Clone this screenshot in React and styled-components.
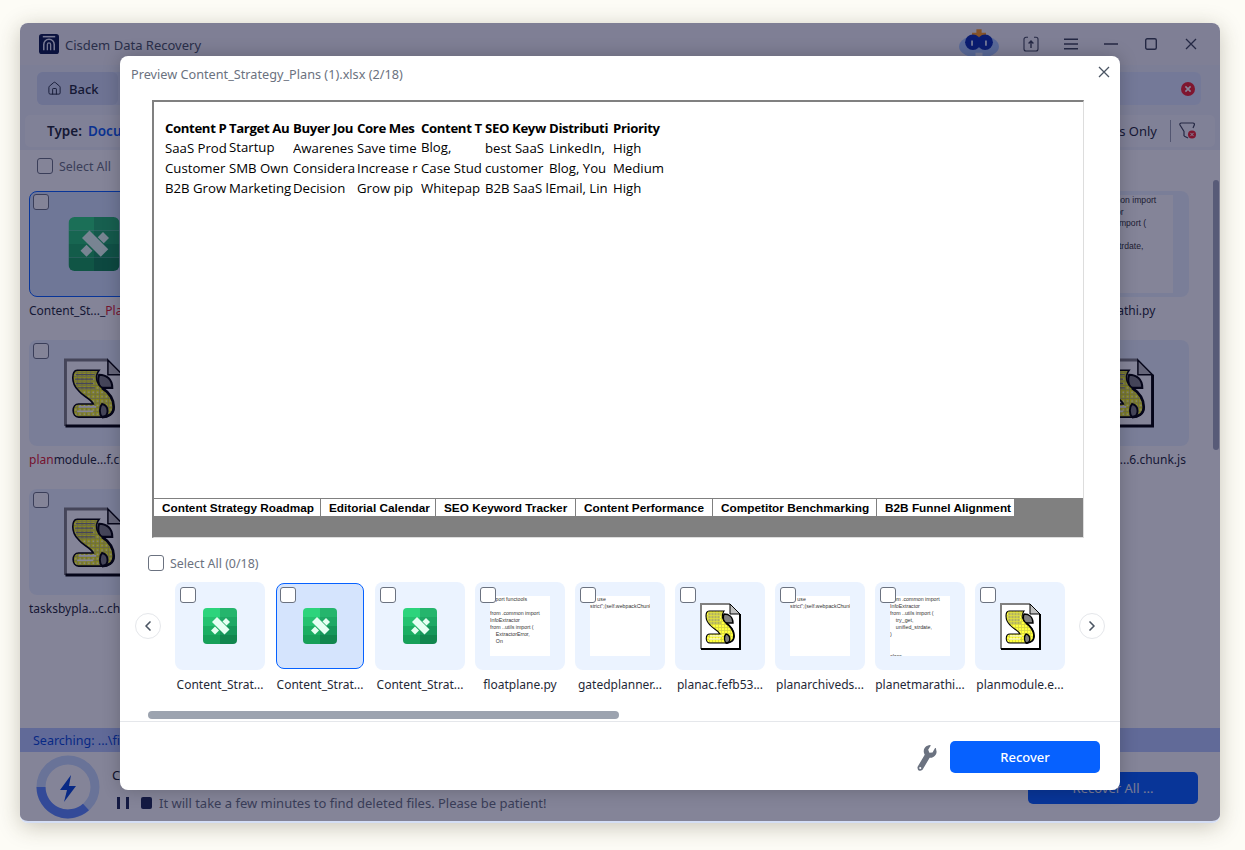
import React from "react";
import styled, { createGlobalStyle } from "styled-components";
import { FaWrench } from "react-icons/fa";
import { ChevronLeft, ChevronRight, House } from "lucide-react";

const Global = createGlobalStyle`
  html, body { margin: 0; padding: 0; height: 100%; background: #fdfcf6; }
  body { font-family: "Noto Sans", "Open Sans", Arial, sans-serif; }
  * { box-sizing: border-box; }
`;

const Page = styled.div`
  width: 1245px; height: 850px; padding: 23px 25px 27px 20px; overflow: hidden;
`;
const Win = styled.div`
  position: relative; width: 1200px; height: 800px; border-radius: 8px; overflow: hidden;
  background: #fff; display: flex; flex-direction: column;
  border-bottom: 2px solid #d4def5;
`;
const WinShadow = styled.div`
  border-radius: 8px; box-shadow: 0 4px 22px rgba(60, 55, 30, 0.28);
`;
const TitleBar = styled.div`
  height: 42px; display: flex; align-items: center; padding: 0 9px 0 19px; background: #f4f4f8; flex: none;
`;
const AppName = styled.span`
  font-size: 13px; color: #4b5563; margin-left: 6px; flex: 1; padding-top: 1px;
`;
const WinIcons = styled.div`
  display: flex; align-items: center; color: #3f4656;
`;
const WinIconCell = styled.div`
  width: ${p => p.$w || 40}px; display: flex; justify-content: center; align-items: center;
`;
const Toolbar = styled.div`
  flex: none; height: 48px; padding: 7px 19px 8px 17px; background: #eef2fb;
`;
const SearchBar = styled.div`
  height: 33px; border-radius: 6px; background: #dfe9ff; display: flex; align-items: center; justify-content: space-between; padding-right: 6px;
`;
const BackBtn = styled.div`
  width: 81px; height: 33px; border-radius: 6px; background: #d2dcf5; display: flex; align-items: center; gap: 7px; padding-left: 10px;
  font-size: 13px; font-weight: 500; color: #1f2937;
`;
const TypeWrap = styled.div`
  flex: none; height: 37px; padding: 2px 5px 3px 5px; background: #eef2fb;
`;
const TypeBar = styled.div`
  height: 32px; border-radius: 5px; background: #f7f8fc; display: flex; align-items: center; padding: 0 18px 0 22px; font-size: 13px; color: #1f2937;
`;
const TypeLabel = styled.b`
  font-weight: 600; font-size: 13.5px; margin-right: 6px;
`;
const TypeValue = styled.b`
  font-weight: 600; font-size: 13.5px; color: #0a5bf0; flex: 1;
`;
const Divider = styled.div`
  width: 1px; height: 22px; background: #9aa0ae; margin: 0 8px 0 13px;
`;
const SelectRow = styled.label`
  display: flex; align-items: center; gap: 6px; font-size: 12.4px; color: #6b7280;
`;
const MainSelect = styled.div`
  flex: none; height: 41px; padding: 0 0 9px 17px; display: flex; align-items: center;
`;
const Box = styled.span`
  display: block; flex: none; width: 16px; height: 16px; border-radius: 3px; border: 1px solid #6b7280; background: #fff;
`;
const FileGrid = styled.div`
  flex: 1; min-height: 0; padding: 0 31px 0 9px; display: grid; grid-template-columns: repeat(8, 130px); column-gap: 17.14px; grid-auto-rows: 149px;
`;
const FileCell = styled.div`
  position: relative; min-width: 0;
`;
const FileCard = styled.div`
  height: 106px; border-radius: 8px; display: flex; align-items: center; justify-content: center;
  background: ${p => (p.$active ? "#d5e4fd" : "#ebf3ff")};
  border: ${p => (p.$active ? "1.5px solid #0661ff" : "none")};
`;
const FileName = styled.div`
  margin-top: 6px; font-size: 12px; line-height: 16px; color: #1f2937; white-space: nowrap;
`;
const Hit = styled.span`
  color: #e0202a;
`;
const CardCheck = styled.div`
  position: absolute; top: 3px; left: 4px;
`;
const ScrollThumb = styled.div`
  position: absolute; top: 157px; right: 1px; width: 6px; height: 270px; border-radius: 3px; background: #a6adbf;
`;
const SearchStrip = styled.div`
  flex: none; height: 24px; background: #b9cbff; color: #0648d8; font-size: 12.5px; display: flex; align-items: center; padding-left: 13px;
`;
const BottomBar = styled.div`
  flex: none; height: 69px; display: flex; align-items: center; padding: 0 22px 0 16px; position: relative;
`;
const Ring = styled.div`
  flex: none; width: 64px; height: 64px; margin-right: 12px;
`;
const StatusCol = styled.div`
  flex: 1; display: flex; flex-direction: column; gap: 11px; padding-top: 3px;
`;
const StatusTitle = styled.div`
  font-size: 13px; line-height: 18px; color: #111827;
`;
const StatusLine = styled.div`
  display: flex; align-items: center; font-size: 13px; line-height: 16px; color: #6b7280; padding-left: 5px;
`;
const PauseIcon = styled.span`
  width: 12px; height: 12px; border-left: 3px solid #1f2a55; border-right: 3px solid #1f2a55; margin-right: 12px; padding: 0 3px;
`;
const StopIcon = styled.span`
  width: 11px; height: 12px; border-radius: 2px; background: #1f2a55; margin-right: 7px;
`;
const RecoverAll = styled.div`
  flex: none; width: 170px; height: 32px; border-radius: 5px; background: #0661ff; font-size: 13px;
  display: flex; align-items: center; justify-content: center; margin-top: 3px;
`;
const RecoverAllText = styled.span`
  color: #e8ecf8;
`;

const Dim = styled.div`
  position: absolute; inset: 0; background: rgba(10, 10, 50, 0.5);
`;
const Modal = styled.div`
  position: absolute; left: 100px; top: 33px; width: 1000px; height: 734px; background: #fff; border-radius: 8px;
  box-shadow: 0 0 18px rgba(0, 0, 0, 0.22); display: flex; flex-direction: column;
`;
const ModalHead = styled.div`
  flex: none; height: 44px; display: flex; align-items: flex-start; justify-content: space-between; padding: 9px 10px 0 11px;
  font-size: 12.7px; line-height: 18px; color: #6b7280;
`;
const ModalClose = styled.div`
  margin-top: 1px; display: flex; color: #4b5563;
`;
const Preview = styled.div`
  flex: none; margin-left: 32px; width: 932px; height: 438px; border-top: 2px solid #808080; border-left: 2px solid #808080;
  border-right: 1px solid #ddd; border-bottom: 1px solid #ddd; display: flex; flex-direction: column;
`;
const Sheet = styled.div`
  flex: 1; padding: 16px 0 0 11px; display: grid; grid-template-columns: repeat(8, 64px); grid-auto-rows: 20px; align-content: start;
  font-size: 13.2px; line-height: 20px; color: #000; font-family: "Open Sans", "Noto Sans", sans-serif;
`;
const Cell = styled.div`
  white-space: nowrap; overflow: hidden; font-weight: ${p => (p.$head ? 700 : 400)}; margin-top: ${p => (p.$up ? -1 : 0)}px;
  letter-spacing: ${p => (p.$head ? "-0.38px" : "0")};
`;
const TabStrip = styled.div`
  flex: none; height: 39px; background: #808080; display: grid; grid-template-columns: 167px 115px 140px 137px 164px 138px; grid-auto-rows: 17px; padding-top: 1px;
`;
const SheetTab = styled.div`
  background: #fff; border-right: 1px solid #808080; padding-left: 8px; display: flex; align-items: center;
  font-family: "Liberation Sans", Arial, sans-serif; font-weight: 700; font-size: 11.8px; color: #000; white-space: nowrap;
`;
const ThumbHead = styled.div`
  flex: none; height: 44px; padding: 6px 0 0 28px; display: flex; align-items: center;
`;
const Carousel = styled.div`
  flex: none; display: flex; align-items: flex-start; padding-left: 15px;
`;
const ArrowBtn = styled.div`
  flex: none; width: 26px; height: 26px; margin-top: 31px; border-radius: 50%; background: #fff; border: 1px solid #e5e7eb;
  display: flex; align-items: center; justify-content: center; color: #4b5563;
`;
const Track = styled.div`
  flex: none; width: 890px; margin: 0 14px; display: flex; gap: 10px; overflow: hidden;
`;
const Thumb = styled.div`
  position: relative; flex: none; width: 90px; display: flex; flex-direction: column;
`;
const ThumbCard = styled.div`
  border-radius: 8px; display: flex; align-items: center; justify-content: center;
  height: ${p => (p.$active ? 86 : 88)}px;
  margin: ${p => (p.$active ? 1 : 0)}px;
  background: ${p => (p.$active ? "#d5e4fd" : "#ebf3ff")};
  border: ${p => (p.$active ? "1px solid #0661ff" : "none")};
`;
const ThumbName = styled.div`
  margin-top: 7px; font-size: 12px; line-height: 16px; color: #1f2937; text-align: center; white-space: nowrap;
`;
const ThumbCheck = styled.div`
  position: absolute; top: 5px; left: 5px;
`;
const CodePage = styled.pre`
  margin: 0; background: #fff; overflow: hidden; white-space: pre; text-align: left; font-family: "Liberation Sans", Arial, sans-serif; color: #333;
  width: ${p => p.$size}px; height: ${p => p.$size}px; font-size: ${p => p.$size * 0.088}px; line-height: ${p => p.$size * 0.118}px;
`;
const HScroll = styled.div`
  flex: none; margin: 18px 0 0 28px; width: 471px; height: 8px; border-radius: 4px; background: #9ca3af;
`;
const ModalFoot = styled.div`
  flex: 1; margin-top: 2px; border-top: 1px solid #e5e7eb; display: flex; align-items: center; justify-content: flex-end; padding: 2px 20px 0 0; gap: 12px; color: #6b7280;
`;
const WrenchWrap = styled.div`
  display: flex; transform: rotate(-14deg);
`;
const RecoverBtn = styled.div`
  width: 150px; height: 32px; border-radius: 5px; background: #0661ff; color: #fff; font-size: 13px; font-weight: 500;
  display: flex; align-items: center; justify-content: center;
`;

function ExcelIcon({ w = 34, h = 36 }) {
  return (
    <svg width={w} height={h} viewBox="0 0 34 36">
      <defs>
        <clipPath id="xl"><rect width="34" height="36" rx="4" /></clipPath>
      </defs>
      <g clipPath="url(#xl)">
        <rect x="0" y="0" width="17" height="9" fill="#2dd47c" />
        <rect x="0" y="9" width="17" height="9" fill="#25c270" />
        <rect x="0" y="18" width="17" height="9" fill="#1cae62" />
        <rect x="0" y="27" width="17" height="9" fill="#17a059" />
        <rect x="17" y="0" width="17" height="9" fill="#25b56d" />
        <rect x="17" y="9" width="17" height="9" fill="#1ea865" />
        <rect x="17" y="18" width="17" height="9" fill="#16965a" />
        <rect x="17" y="27" width="17" height="9" fill="#11864e" />
      </g>
      <path d="M9 14 L14 9 L26.5 21.5 L21.5 26.5 Z" fill="#e6fff2" />
      <path d="M19.5 13.5 L23 10 L27 14 L23.5 17.5 Z" fill="#e6fff2" />
      <path d="M8 22.5 L12 18.5 L16 22.5 L12 26.5 Z" fill="#e6fff2" />
    </svg>
  );
}

function ScriptIcon({ w = 41, h = 47, id = "s" }) {
  return (
    <svg width={w} height={h} viewBox="0 0 41 47">
      <defs>
        <pattern id={id} width="3" height="3" patternUnits="userSpaceOnUse">
          <rect width="3" height="3" fill="#ffff00" />
          <rect width="3" height="0.6" fill="#c8c860" />
          <rect width="0.6" height="3" fill="#c8c860" />
          <rect x="1.5" y="1.5" width="1" height="1" fill="#fff" />
        </pattern>
      </defs>
      <path d="M1 1 H30 L40 11 V46 H1 Z" fill="#fff" />
      <path d="M1 46 V1 H30" fill="none" stroke="#808080" strokeWidth="2" />
      <path d="M40 11 V46 H1" fill="none" stroke="#000" strokeWidth="2" />
      <path d="M30 1 L40 11 H30 Z" fill="#c0c0c0" stroke="#000" strokeWidth="1" />
      <path d="M24 11 C29 11 33 14 33 20 H25 C23 17 23 14 24 11 Z" fill="#808080" stroke="#000" strokeWidth="1.4" />
      <path d="M9 8 H24 C21 12 22 17 26 20 C32 24 34 28 34 33 C34 38 30 40 26 40 H10 C5 40 5 31 10 31 H20 C18 27 13 26 10 22 C7 19 6 16 6 13 C6 10 7 8 9 8 Z" fill={`url(#${id})`} stroke="#000" strokeWidth="1.1" />
      <path d="M8 11 H21 M7.5 14 H20 M8 17 H20 M9.5 20 H21" stroke="#808080" strokeWidth="0.9" />
      <path d="M10 33 H22 M9 36 H20" stroke="#fff" strokeWidth="1.2" />
      <path d="M26 31 C31 32 31 40 26 40 C24 38 24 33 26 31 Z" fill="#808080" stroke="#000" strokeWidth="1.3" />
      <path d="M26 20 C32 24 34 28 34 33 C34 38 30 40 26 40" fill="none" stroke="#000" strokeWidth="1.8" />
    </svg>
  );
}

const Logo = () => (
  <svg width="20" height="20" viewBox="0 0 21 21">
    <rect width="21" height="21" rx="3" fill="#0b1a4a" />
    <path d="M5 17 V11 a5.5 5.5 0 0 1 11 0 V17" fill="none" stroke="#e5e9f5" strokeWidth="1.6" />
    <path d="M8.8 17 V11 a1.7 1.7 0 0 1 3.4 0 V17" fill="none" stroke="#e5e9f5" strokeWidth="1.4" />
    <rect x="4" y="2" width="13" height="1.6" fill="#e5e9f5" />
  </svg>
);

const Mascot = () => (
  <svg width="46" height="34" viewBox="0 0 46 34">
    <ellipse cx="23" cy="20" rx="23" ry="13" fill="#a9c8ff" />
    <path d="M20 0 H26 V4 H31 V9 H15 V4 H20 Z" fill="#ff9a1f" />
    <ellipse cx="16" cy="15" rx="9" ry="9" fill="#0b2fb0" />
    <ellipse cx="30" cy="15" rx="9" ry="9" fill="#0b2fb0" />
    <rect x="14" y="13" width="2" height="6" fill="#e6eeff" />
    <rect x="30" y="13" width="2" height="6" fill="#e6eeff" />
    <rect x="19" y="27" width="8" height="4" fill="#e6eeff" />
  </svg>
);

const UploadIcon = () => (
  <svg width="16" height="16" viewBox="0 0 16 16" fill="none" stroke="currentColor" strokeWidth="1.1">
    <path d="M5 1.2 H3 a2 2 0 0 0 -2 2 V13 a2 2 0 0 0 2 2 H13 a2 2 0 0 0 2 -2 V3.2 a2 2 0 0 0 -2 -2 H11" />
    <path d="M8 12 V5 M5.6 7.4 L8 5 L10.4 7.4" strokeWidth="1.4" />
  </svg>
);

const Burger = () => (
  <svg width="14" height="12" viewBox="0 0 14 12" stroke="currentColor" strokeWidth="1.5">
    <path d="M0 1.2 H14 M0 6 H14 M0 10.8 H14" />
  </svg>
);

const Minimize = () => (
  <svg width="14" height="14" viewBox="0 0 14 14" stroke="currentColor" strokeWidth="1.4"><path d="M0 7 H14" /></svg>
);

const Maximize = () => (
  <svg width="12" height="12" viewBox="0 0 12 12" fill="none" stroke="currentColor" strokeWidth="1.4"><rect x="0.7" y="0.7" width="10.6" height="10.6" rx="1.5" /></svg>
);

const CloseGlyph = () => (
  <svg width="12" height="12" viewBox="0 0 12 12" stroke="currentColor" strokeWidth="1.3"><path d="M1 1 L11 11 M11 1 L1 11" /></svg>
);

const RedClear = () => (
  <svg width="14" height="14" viewBox="0 0 14 14">
    <circle cx="7" cy="7" r="7" fill="#f5222d" />
    <path d="M4.4 4.4 L9.6 9.6 M9.6 4.4 L4.4 9.6" stroke="#fff" strokeWidth="1.6" />
  </svg>
);

const FilterOff = () => (
  <svg width="18" height="18" viewBox="0 0 18 18">
    <path d="M5 14 V9.5 L1 3 a1.4 1.4 0 0 1 1.2 -2 H14 a1.4 1.4 0 0 1 1.3 2 L14 6" fill="none" stroke="#3f4656" strokeWidth="1.2" />
    <path d="M5 14 L9 16" stroke="#3f4656" strokeWidth="1.2" />
    <circle cx="13" cy="12.5" r="4" fill="#f5222d" />
    <path d="M11.4 10.9 L14.6 14.1 M14.6 10.9 L11.4 14.1" stroke="#fff" strokeWidth="1" />
  </svg>
);

const Bolt = () => (
  <svg width="64" height="64" viewBox="0 0 64 64">
    <circle cx="32" cy="32" r="27" fill="none" stroke="#c8dcff" strokeWidth="9" />
    <path d="M5 32 A27 27 0 0 0 50 52" fill="none" stroke="#5d8bff" strokeWidth="9" />
    <path d="M35 20 L24 35 H31 L28 47 L40 31 H33 Z" fill="#0648d8" />
  </svg>
);

const pyA = `import functools

from .common import
InfoExtractor
from ..utils import (
    ExtractorError,
    On`;
const pyB = `from .common import
InfoExtractor
from ..utils import (
    try_get,
    unified_strdate,
)


class`;
const jsA = `     use
strict";(self.webpackChunkl`;

const big = [
  { kind: "xl", label: <>Content_St..._<Hit>Plans</Hit> (3).xlsx</>, active: true },
  { kind: "xl", label: "Content_Strategy.xlsx" },
  { kind: "xl", label: "Content_Strategy.xlsx" },
  { kind: "xl", label: "Content_Strategy.xlsx" },
  { kind: "xl", label: "floatplane.py" },
  { kind: "xl", label: "gatedplanner.js" },
  { kind: "xl", label: "planac.js" },
  { kind: "code", text: pyB, label: "planetmarathi.py" },
  { kind: "sc", label: <><Hit>plan</Hit>module...f.chunk.js</> },
  { kind: "sc", label: "planner.js" },
  { kind: "sc", label: "planner.js" },
  { kind: "sc", label: "planner.js" },
  { kind: "sc", label: "planner.js" },
  { kind: "sc", label: "planner.js" },
  { kind: "sc", label: "planner.js" },
  { kind: "sc", label: "planmodio...6.chunk.js" },
  { kind: "sc", label: "tasksbypla...c.chunk.js" },
];

const thumbs = [
  { kind: "xl", label: "Content_Strat..." },
  { kind: "xl", label: "Content_Strat...", active: true },
  { kind: "xl", label: "Content_Strat..." },
  { kind: "code", text: pyA, label: "floatplane.py" },
  { kind: "code", text: jsA, label: "gatedplanner..." },
  { kind: "sc", label: "planac.fefb53..." },
  { kind: "code", text: jsA, label: "planarchiveds..." },
  { kind: "code", text: pyB, label: "planetmarathi..." },
  { kind: "sc", label: "planmodule.e..." },
];

const rows = [
  ["Content P", "Target Au", "Buyer Jou", "Core Mes", "Content T", "SEO Keyw", "Distributi", "Priority"],
  ["SaaS Prod", "Startup", "Awarenes", "Save time", "Blog,", "best SaaS", "LinkedIn,", "High"],
  ["Customer", "SMB Own", "Considera", "Increase r", "Case Stud", "customer", "Blog, You", "Medium"],
  ["B2B Grow", "Marketing", "Decision", "Grow pip", "Whitepap", "B2B SaaS l", "Email, Lin", "High"],
];

const tabs = ["Content Strategy Roadmap", "Editorial Calendar", "SEO Keyword Tracker", "Content Performance", "Competitor Benchmarking", "B2B Funnel Alignment"];

export default function App() {
  return (
    <Page>
      <Global />
      <WinShadow>
        <Win>
          <TitleBar>
            <Logo />
            <AppName>Cisdem Data Recovery</AppName>
            <WinIcons>
              <WinIconCell><Mascot /></WinIconCell>
              <WinIconCell $w={12} />
              <WinIconCell><UploadIcon /></WinIconCell>
              <WinIconCell><Burger /></WinIconCell>
              <WinIconCell><Minimize /></WinIconCell>
              <WinIconCell><Maximize /></WinIconCell>
              <WinIconCell><CloseGlyph /></WinIconCell>
            </WinIcons>
          </TitleBar>
          <Toolbar>
            <SearchBar>
              <BackBtn><House size={15} strokeWidth={1.5} />Back</BackBtn>
              <RedClear />
            </SearchBar>
          </Toolbar>
          <TypeWrap>
            <TypeBar>
              <TypeLabel>Type:</TypeLabel>
              <TypeValue>Documents</TypeValue>
              Deleted Files Only
              <Divider />
              <FilterOff />
            </TypeBar>
          </TypeWrap>
          <MainSelect>
            <SelectRow><Box />Select All</SelectRow>
          </MainSelect>
          <FileGrid>
            {big.map((f, i) => (
              <FileCell key={i}>
                <FileCard $active={f.active}>
                  {f.kind === "xl" && <ExcelIcon w={52} h={54} />}
                  {f.kind === "sc" && <ScriptIcon w={60} h={70} id={`big${i}`} />}
                  {f.kind === "code" && <CodePage $size={98}>{f.text}</CodePage>}
                </FileCard>
                <CardCheck><Box /></CardCheck>
                <FileName>{f.label}</FileName>
              </FileCell>
            ))}
          </FileGrid>
          <ScrollThumb />
          <SearchStrip>Searching: ...\files\documents</SearchStrip>
          <BottomBar>
            <Ring><Bolt /></Ring>
            <StatusCol>
              <StatusTitle>Checking files...</StatusTitle>
              <StatusLine>
                <PauseIcon /><StopIcon />
                It will take a few minutes to find deleted files. Please be patient!
              </StatusLine>
            </StatusCol>
            <RecoverAll><RecoverAllText>Recover All ...</RecoverAllText></RecoverAll>
          </BottomBar>
          <Dim />
          <Modal>
            <ModalHead>
              <span>Preview Content_Strategy_Plans (1).xlsx (2/18)</span>
              <ModalClose><CloseGlyph /></ModalClose>
            </ModalHead>
            <Preview>
              <Sheet>
                {rows.map((r, y) =>
                  r.map((c, x) => (
                    <Cell key={`${y}-${x}`} $head={y === 0} $up={y === 1 && (x === 1 || x === 4)}>{c}</Cell>
                  ))
                )}
              </Sheet>
              <TabStrip>
                {tabs.map(t => <SheetTab key={t}>{t}</SheetTab>)}
              </TabStrip>
            </Preview>
            <ThumbHead>
              <SelectRow><Box />Select All (0/18)</SelectRow>
            </ThumbHead>
            <Carousel>
              <ArrowBtn><ChevronLeft size={16} strokeWidth={2.5} /></ArrowBtn>
              <Track>
                {thumbs.map((t, i) => (
                  <Thumb key={i}>
                    <ThumbCard $active={t.active}>
                      {t.kind === "xl" && <ExcelIcon />}
                      {t.kind === "sc" && <ScriptIcon id={`th${i}`} />}
                      {t.kind === "code" && <CodePage $size={60}>{t.text}</CodePage>}
                    </ThumbCard>
                    <ThumbCheck><Box /></ThumbCheck>
                    <ThumbName>{t.label}</ThumbName>
                  </Thumb>
                ))}
              </Track>
              <ArrowBtn><ChevronRight size={16} strokeWidth={2.5} /></ArrowBtn>
            </Carousel>
            <HScroll />
            <ModalFoot>
              <WrenchWrap><FaWrench size={23} /></WrenchWrap>
              <RecoverBtn>Recover</RecoverBtn>
            </ModalFoot>
          </Modal>
        </Win>
      </WinShadow>
    </Page>
  );
}
